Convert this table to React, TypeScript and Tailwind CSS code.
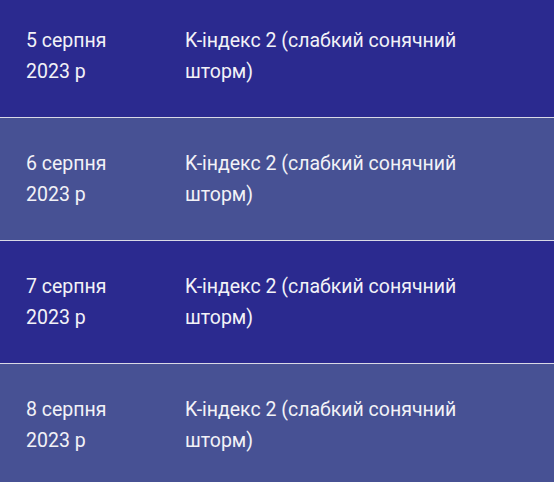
import React from "react";

const rows = [
  { date: "5 серпня 2023 р", text: "K-індекс 2 (слабкий сонячний шторм)" },
  { date: "6 серпня 2023 р", text: "K-індекс 2 (слабкий сонячний шторм)" },
  { date: "7 серпня 2023 р", text: "K-індекс 2 (слабкий сонячний шторм)" },
  { date: "8 серпня 2023 р", text: "K-індекс 2 (слабкий сонячний шторм)" },
];

export default function App() {
  return (
    <div
      className="w-[554px] h-[482px] overflow-hidden bg-[#475194]"
      style={{ fontFamily: "Roboto, 'Noto Sans', sans-serif" }}
    >
      {/* список днів */}
      <div className="-mt-[5px] flex flex-col">
        {rows.map((row, i) => (
          <div
            key={row.date}
            className={`flex py-[30px] pl-[26px] text-[19.5px] leading-[31px] text-[#f2f2f7] border-b border-[#d9d9e6] ${
              i % 2 === 0 ? "bg-[#2b2a8f]" : "bg-[#475194]"
            }`}
          >
            <div className="w-[159px] pr-[50px] shrink-0">{row.date}</div>
            <div className="w-[300px]">{row.text}</div>
          </div>
        ))}
      </div>
    </div>
  );
}
